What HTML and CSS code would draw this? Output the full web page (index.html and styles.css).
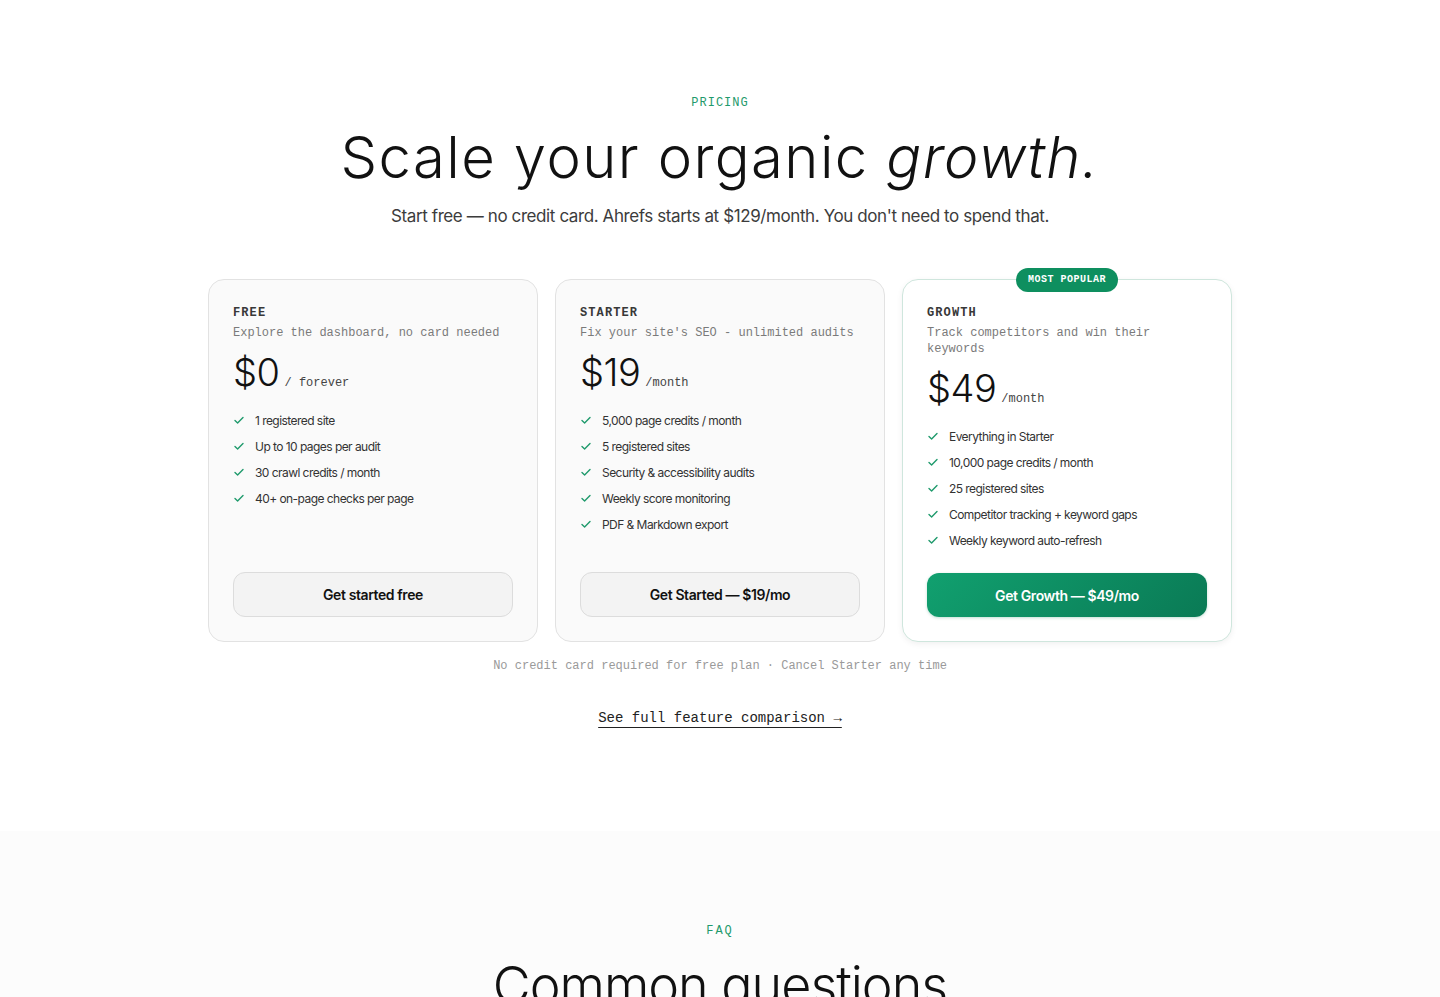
FILE: index.html
```html
<!DOCTYPE html>
<html lang="en">
<head>
<meta charset="utf-8">
<title>Pricing</title>
<link rel="stylesheet" href="styles.css">
</head>
<body>
<section class="pricing">
  <p class="eyebrow">PRICING</p>
  <h1 class="display">Scale your organic <em>growth.</em></h1>
  <p class="lede">Start free — no credit card. Ahrefs starts at $129/month. You don't need to spend that.</p>

  <div class="plans">
    <article class="plan">
      <p class="plan-name">FREE</p>
      <p class="plan-desc">Explore the dashboard, no card needed</p>
      <p class="price"><span class="amount">$0</span><span class="period">/ forever</span></p>
      <ul class="features">
        <li><svg class="check" viewBox="0 0 12 12"><path d="M2 6.5l2.6 2.4L10 3.5"/></svg>1 registered site</li>
        <li><svg class="check" viewBox="0 0 12 12"><path d="M2 6.5l2.6 2.4L10 3.5"/></svg>Up to 10 pages per audit</li>
        <li><svg class="check" viewBox="0 0 12 12"><path d="M2 6.5l2.6 2.4L10 3.5"/></svg>30 crawl credits / month</li>
        <li><svg class="check" viewBox="0 0 12 12"><path d="M2 6.5l2.6 2.4L10 3.5"/></svg>40+ on-page checks per page</li>
      </ul>
      <a class="btn btn-ghost" href="#">Get started free</a>
    </article>

    <article class="plan">
      <p class="plan-name">STARTER</p>
      <p class="plan-desc">Fix your site's SEO - unlimited audits</p>
      <p class="price"><span class="amount">$19</span><span class="period">/month</span></p>
      <ul class="features">
        <li><svg class="check" viewBox="0 0 12 12"><path d="M2 6.5l2.6 2.4L10 3.5"/></svg>5,000 page credits / month</li>
        <li><svg class="check" viewBox="0 0 12 12"><path d="M2 6.5l2.6 2.4L10 3.5"/></svg>5 registered sites</li>
        <li><svg class="check" viewBox="0 0 12 12"><path d="M2 6.5l2.6 2.4L10 3.5"/></svg>Security &amp; accessibility audits</li>
        <li><svg class="check" viewBox="0 0 12 12"><path d="M2 6.5l2.6 2.4L10 3.5"/></svg>Weekly score monitoring</li>
        <li><svg class="check" viewBox="0 0 12 12"><path d="M2 6.5l2.6 2.4L10 3.5"/></svg>PDF &amp; Markdown export</li>
      </ul>
      <a class="btn btn-ghost" href="#">Get Started — $19/mo</a>
    </article>

    <article class="plan plan-featured">
      <span class="badge">MOST POPULAR</span>
      <p class="plan-name">GROWTH</p>
      <p class="plan-desc">Track competitors and win their keywords</p>
      <p class="price"><span class="amount">$49</span><span class="period">/month</span></p>
      <ul class="features">
        <li><svg class="check" viewBox="0 0 12 12"><path d="M2 6.5l2.6 2.4L10 3.5"/></svg>Everything in Starter</li>
        <li><svg class="check" viewBox="0 0 12 12"><path d="M2 6.5l2.6 2.4L10 3.5"/></svg>10,000 page credits / month</li>
        <li><svg class="check" viewBox="0 0 12 12"><path d="M2 6.5l2.6 2.4L10 3.5"/></svg>25 registered sites</li>
        <li><svg class="check" viewBox="0 0 12 12"><path d="M2 6.5l2.6 2.4L10 3.5"/></svg>Competitor tracking + keyword gaps</li>
        <li><svg class="check" viewBox="0 0 12 12"><path d="M2 6.5l2.6 2.4L10 3.5"/></svg>Weekly keyword auto-refresh</li>
      </ul>
      <a class="btn btn-primary" href="#">Get Growth — $49/mo</a>
    </article>
  </div>

  <p class="footnote">No credit card required for free plan · Cancel Starter any time</p>
  <a class="compare" href="#">See full feature comparison →</a>
</section>

<section class="faq">
  <p class="eyebrow eyebrow-wide">FAQ</p>
  <h2 class="display display-sm">Common questions</h2>
</section>
</body>
</html>
```

FILE: styles.css
```css
* { box-sizing: border-box; }

html, body {
  margin: 0;
  padding: 0;
  background: #ffffff;
  color: #111;
  font-family: "Inter", "Liberation Sans", sans-serif;
}

p, h1, h2, ul { margin: 0; padding: 0; }

.pricing {
  display: flex;
  flex-direction: column;
  align-items: center;
  padding: 95px 0 103px;
  background: #ffffff;
}

.eyebrow {
  font-family: "Liberation Mono", "DejaVu Sans Mono", monospace;
  font-size: 12px;
  line-height: 16px;
  letter-spacing: 1px;
  color: #1f9a6c;
}

.display {
  font-family: "Inter", "Liberation Sans", sans-serif;
  font-weight: 300;
  font-size: 58px;
  line-height: 62px;
  letter-spacing: 1.4px;
  color: #111;
  margin-top: 15px;
  text-align: center;
}

.display em { font-style: italic; }

.display-sm {
  font-size: 52px;
  letter-spacing: -1px;
  margin-top: 16px;
}

.lede {
  margin-top: 15px;
  font-size: 17px;
  line-height: 27px;
  letter-spacing: -0.4px;
  color: #3c3c3c;
}

.plans {
  margin-top: 49px;
  width: 1024px;
  display: grid;
  grid-template-columns: repeat(3, 1fr);
  gap: 17px;
}

.plan {
  position: relative;
  display: flex;
  flex-direction: column;
  padding: 25px 24px 24px;
  background: #fafafa;
  border: 1px solid #e2e2e2;
  border-radius: 16px;
}

.plan-featured {
  background: #ffffff;
  border-color: #cfe6dd;
  box-shadow: 0 2px 6px rgba(0, 0, 0, 0.06);
}

.badge {
  position: absolute;
  top: -12px;
  left: 50%;
  transform: translateX(-50%);
  height: 24px;
  padding: 0 12px;
  border-radius: 12px;
  background: #0e8f5f;
  color: #fff;
  font-family: "Liberation Mono", "DejaVu Sans Mono", monospace;
  font-weight: 700;
  font-size: 10px;
  line-height: 24px;
  letter-spacing: 0.5px;
  white-space: nowrap;
}

.plan-name {
  font-family: "Liberation Mono", "DejaVu Sans Mono", monospace;
  font-weight: 700;
  font-size: 12px;
  line-height: 16px;
  letter-spacing: 1.1px;
  color: #383838;
}

.plan-desc {
  margin-top: 4px;
  font-family: "Liberation Mono", "DejaVu Sans Mono", monospace;
  font-size: 12px;
  line-height: 16px;
  color: #7a7a7a;
}

.price {
  margin-top: 12px;
  display: flex;
  align-items: baseline;
  gap: 5px;
}

.amount {
  font-family: "Inter", "Liberation Sans", sans-serif;
  font-weight: 300;
  font-size: 38px;
  line-height: 38px;
  letter-spacing: -0.5px;
  color: #111;
}

.period {
  font-family: "Liberation Mono", "DejaVu Sans Mono", monospace;
  font-size: 12px;
  color: #444;
}

.features {
  list-style: none;
  margin-top: 16px;
  margin-bottom: 20px;
}

.features li {
  display: flex;
  align-items: center;
  gap: 10px;
  height: 26px;
  font-size: 12px;
  letter-spacing: -0.55px;
  color: #333;
}

.check {
  width: 12px;
  height: 12px;
  flex: none;
  fill: none;
  stroke: #1f9a6c;
  stroke-width: 1.4;
  stroke-linecap: round;
  stroke-linejoin: round;
}

.btn {
  margin-top: auto;
  display: flex;
  align-items: center;
  justify-content: center;
  height: 45px;
  border-radius: 12px;
  font-size: 14px;
  font-weight: 600;
  letter-spacing: -0.4px;
  text-decoration: none;
}

.btn-ghost {
  background: #f3f3f3;
  border: 1px solid #dcdcdc;
  color: #111;
}

.btn-primary {
  height: 44px;
  background: linear-gradient(135deg, #11a06f 0%, #0a7a55 100%);
  color: #fff;
  border: 0;
  box-shadow: 0 1px 3px rgba(10, 122, 85, 0.25);
}

.footnote {
  margin-top: 16px;
  font-family: "Liberation Mono", "DejaVu Sans Mono", monospace;
  font-size: 12px;
  line-height: 16px;
  color: #9a9a9a;
}

.compare {
  margin-top: 34px;
  font-family: "Liberation Mono", "DejaVu Sans Mono", monospace;
  font-size: 14px;
  line-height: 20px;
  color: #222;
  text-decoration: underline;
  text-underline-offset: 5px;
  text-decoration-thickness: 1px;
}

.faq {
  display: flex;
  flex-direction: column;
  align-items: center;
  padding: 92px 0 80px;
  background: #fcfcfc;
}

.eyebrow-wide { letter-spacing: 2px; }
```
